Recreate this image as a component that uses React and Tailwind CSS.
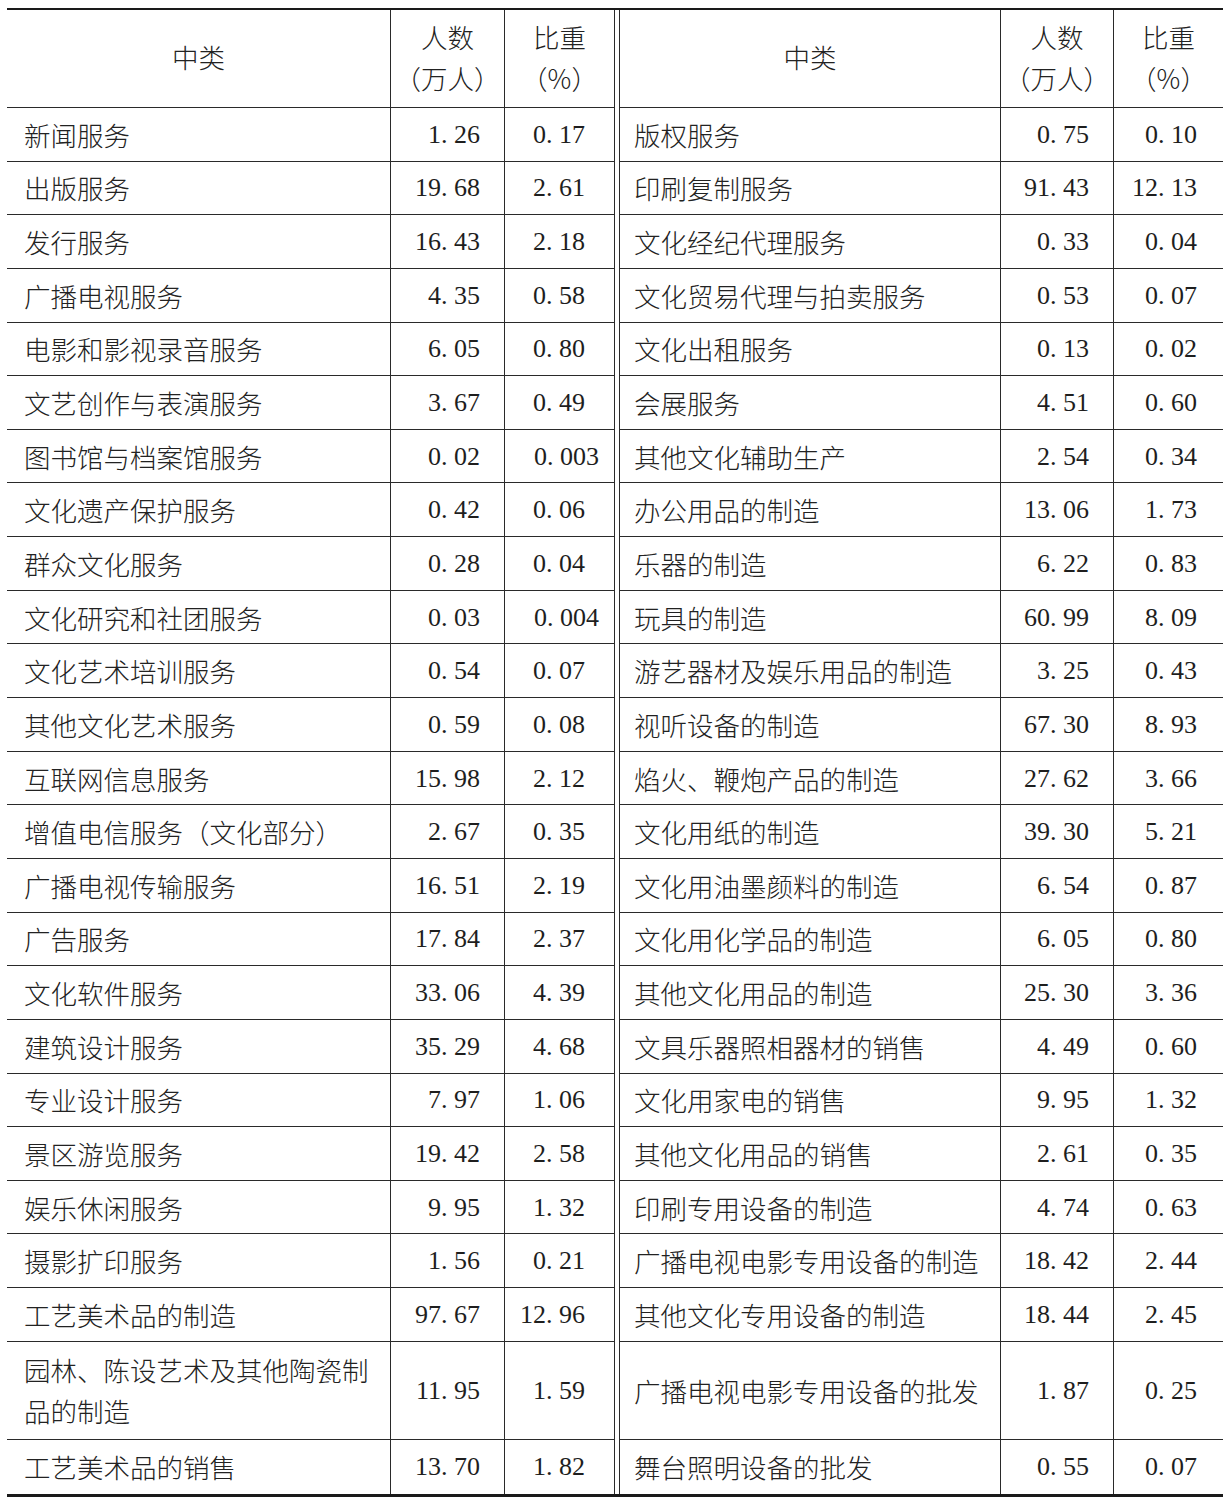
import React from "react";

const left = [
  ["新闻服务", "1. 26", "0. 17"],
  ["出版服务", "19. 68", "2. 61"],
  ["发行服务", "16. 43", "2. 18"],
  ["广播电视服务", "4. 35", "0. 58"],
  ["电影和影视录音服务", "6. 05", "0. 80"],
  ["文艺创作与表演服务", "3. 67", "0. 49"],
  ["图书馆与档案馆服务", "0. 02", "0. 003"],
  ["文化遗产保护服务", "0. 42", "0. 06"],
  ["群众文化服务", "0. 28", "0. 04"],
  ["文化研究和社团服务", "0. 03", "0. 004"],
  ["文化艺术培训服务", "0. 54", "0. 07"],
  ["其他文化艺术服务", "0. 59", "0. 08"],
  ["互联网信息服务", "15. 98", "2. 12"],
  ["增值电信服务（文化部分）", "2. 67", "0. 35"],
  ["广播电视传输服务", "16. 51", "2. 19"],
  ["广告服务", "17. 84", "2. 37"],
  ["文化软件服务", "33. 06", "4. 39"],
  ["建筑设计服务", "35. 29", "4. 68"],
  ["专业设计服务", "7. 97", "1. 06"],
  ["景区游览服务", "19. 42", "2. 58"],
  ["娱乐休闲服务", "9. 95", "1. 32"],
  ["摄影扩印服务", "1. 56", "0. 21"],
  ["工艺美术品的制造", "97. 67", "12. 96"],
  ["园林、陈设艺术及其他陶瓷制品的制造", "11. 95", "1. 59"],
  ["工艺美术品的销售", "13. 70", "1. 82"],
];

const right = [
  ["版权服务", "0. 75", "0. 10"],
  ["印刷复制服务", "91. 43", "12. 13"],
  ["文化经纪代理服务", "0. 33", "0. 04"],
  ["文化贸易代理与拍卖服务", "0. 53", "0. 07"],
  ["文化出租服务", "0. 13", "0. 02"],
  ["会展服务", "4. 51", "0. 60"],
  ["其他文化辅助生产", "2. 54", "0. 34"],
  ["办公用品的制造", "13. 06", "1. 73"],
  ["乐器的制造", "6. 22", "0. 83"],
  ["玩具的制造", "60. 99", "8. 09"],
  ["游艺器材及娱乐用品的制造", "3. 25", "0. 43"],
  ["视听设备的制造", "67. 30", "8. 93"],
  ["焰火、鞭炮产品的制造", "27. 62", "3. 66"],
  ["文化用纸的制造", "39. 30", "5. 21"],
  ["文化用油墨颜料的制造", "6. 54", "0. 87"],
  ["文化用化学品的制造", "6. 05", "0. 80"],
  ["其他文化用品的制造", "25. 30", "3. 36"],
  ["文具乐器照相器材的销售", "4. 49", "0. 60"],
  ["文化用家电的销售", "9. 95", "1. 32"],
  ["其他文化用品的销售", "2. 61", "0. 35"],
  ["印刷专用设备的制造", "4. 74", "0. 63"],
  ["广播电视电影专用设备的制造", "18. 42", "2. 44"],
  ["其他文化专用设备的制造", "18. 44", "2. 45"],
  ["广播电视电影专用设备的批发", "1. 87", "0. 25"],
  ["舞台照明设备的批发", "0. 55", "0. 07"],
];

const grid =
  "grid grid-cols-[384px_114px_110px_5px_381px_113px_109px] border-[#2a2a2a]";
const cjk =
  "font-['Noto_Sans_CJK_SC','Noto_Sans_CJK_TC',sans-serif] font-light text-[26.5px] leading-[41px] text-[#222222]";
const num =
  "font-['Liberation_Serif','Noto_Sans_CJK_SC',serif] text-[26px] text-[#1e1e1e]";

function Row({ l, r, h, last }) {
  const bb = last ? "" : "border-b";
  const three = (v) => v.split(". ")[1].length === 3;
  return (
    <div className={grid} style={{ height: h }}>
      <div className={`${bb} border-r border-[#2a2a2a] pl-[17px] pr-[8px] flex items-center ${cjk}`}>
        {l[0]}
      </div>
      <div className={`${bb} border-r border-[#2a2a2a] pr-[24px] flex items-center justify-end ${num}`}>
        {l[1]}
      </div>
      <div
        className={`${bb} border-r border-[#2a2a2a] flex items-center justify-end ${num} ${
          three(l[2]) ? "pr-[15px]" : "pr-[29px]"
        }`}
      >
        {l[2]}
      </div>
      <div className="border-r border-[#2a2a2a]" />
      <div className={`${bb} border-r border-[#2a2a2a] pl-[14px] pr-[8px] flex items-center ${cjk}`}>
        {r[0]}
      </div>
      <div className={`${bb} border-r border-[#2a2a2a] pr-[24px] flex items-center justify-end ${num}`}>
        {r[1]}
      </div>
      <div className={`${bb} border-[#2a2a2a] pr-[26px] flex items-center justify-end ${num}`}>
        {r[2]}
      </div>
    </div>
  );
}

function HeadCell({ children, border = true }) {
  return (
    <div
      className={`border-b ${border ? "border-r" : ""} border-[#2a2a2a] pb-[4px] flex flex-col items-center justify-center ${cjk} [font-feature-settings:'halt']`}
    >
      {children}
    </div>
  );
}

export default function App() {
  return (
    <div className="bg-white w-[1223px] h-[1500px] pt-[8px] pl-[7px]">
      <div className="w-[1216px] border-t-2 border-b-[3px] border-[#1a1a1a]">
        <div className={grid} style={{ height: 98 }}>
          <HeadCell>中类</HeadCell>
          <HeadCell>
            <span>人数</span>
            <span>（万人）</span>
          </HeadCell>
          <HeadCell>
            <span>比重</span>
            <span>（%）</span>
          </HeadCell>
          <div className="border-r border-[#2a2a2a]" />
          <HeadCell>中类</HeadCell>
          <HeadCell>
            <span>人数</span>
            <span>（万人）</span>
          </HeadCell>
          <HeadCell border={false}>
            <span>比重</span>
            <span>（%）</span>
          </HeadCell>
        </div>
        {left.map((l, i) => (
          <Row
            key={i}
            l={l}
            r={right[i]}
            h={i === 23 ? 98 : i === 24 ? 54 : 53.65}
            last={i === 24}
          />
        ))}
      </div>
    </div>
  );
}
